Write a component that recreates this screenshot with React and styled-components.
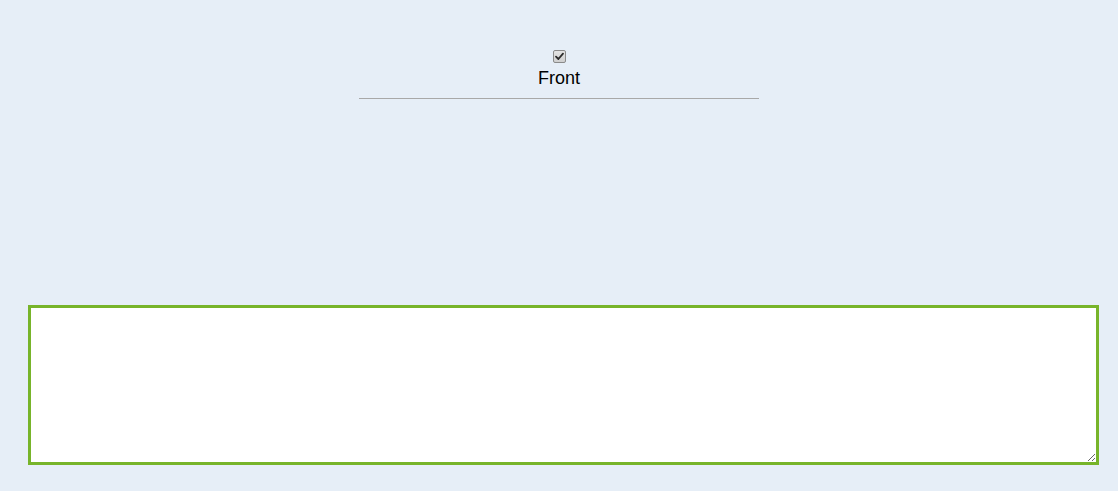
import React from "react";
import styled, { createGlobalStyle } from "styled-components";

const Global = createGlobalStyle`
  html, body {
    margin: 0;
    padding: 0;
    background: #e6eef7;
  }
  body {
    font-family: "Liberation Sans", Arial, sans-serif;
  }
`;

const Page = styled.div`
  display: flex;
  flex-direction: column;
  padding-top: 50px;
  min-height: 491px;
  box-sizing: border-box;
`;

const Header = styled.div`
  display: flex;
  flex-direction: column;
  align-items: center;
`;

const CheckWrap = styled.label`
  position: relative;
  display: block;
  width: 13px;
  height: 13px;
`;

const HiddenInput = styled.input`
  position: absolute;
  inset: 0;
  margin: 0;
  opacity: 0;
`;

const CheckBox = styled.span`
  display: flex;
  align-items: center;
  justify-content: center;
  box-sizing: border-box;
  width: 13px;
  height: 13px;
  border: 1px solid #8a8a8a;
  border-radius: 2px;
  background: linear-gradient(#e4e4e4, #cfcfcf);
`;

const Label = styled.div`
  margin-top: 5px;
  font-size: 18px;
  line-height: 21px;
  color: #000;
`;

const Divider = styled.hr`
  width: 400px;
  margin: 9px 0 0;
  border: 0;
  border-top: 1px solid #a8a8a8;
  height: 0;
`;

const Editor = styled.textarea`
  display: block;
  box-sizing: border-box;
  margin: 206px 0 0 28px;
  width: 1071px;
  height: 160px;
  border: 3px solid #77b42a;
  background: #fff;
  outline: none;
  resize: both;
  padding: 2px;
  font-family: "Liberation Sans", Arial, sans-serif;
  font-size: 14px;
`;

export default function App() {
  return (
    <>
      <Global />
      <Page>
        <Header>
          <CheckWrap>
            <HiddenInput type="checkbox" checked readOnly />
            <CheckBox>
              <svg width="9" height="9" viewBox="0 0 9 9">
                <path
                  d="M1 4.6 L3.4 7 L8 1.6"
                  fill="none"
                  stroke="#2b2b2b"
                  strokeWidth="1.8"
                  strokeLinecap="round"
                  strokeLinejoin="round"
                />
              </svg>
            </CheckBox>
          </CheckWrap>
          <Label>Front</Label>
          <Divider />
        </Header>
        <Editor />
      </Page>
    </>
  );
}
